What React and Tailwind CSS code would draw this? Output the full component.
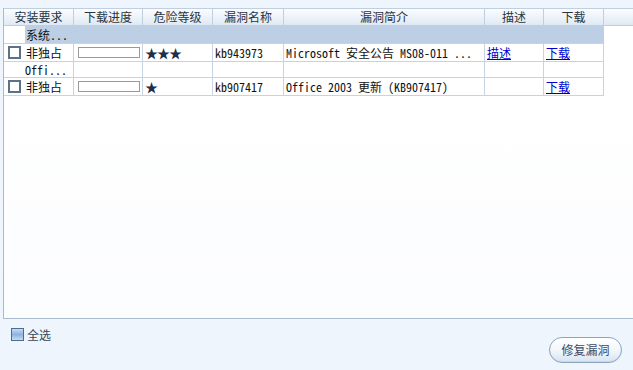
import React from "react";

const cn = "font-['Noto_Sans_CJK_SC','Noto_Sans',sans-serif]";
const mono = "font-['Noto_Sans_Mono_CJK_SC','Noto_Sans_CJK_SC','Liberation_Mono',monospace]";
const widths = ["w-[70px]", "w-[69px]", "w-[70px]", "w-[71px]", "w-[201px]", "w-[59px]", "w-[60px]"];
const heads = ["安装要求", "下载进度", "危险等级", "漏洞名称", "漏洞简介", "描述", "下载"];

function Box() {
  return <span className="inline-block w-[13px] h-[13px] border-2 border-[#5d7189] bg-white shrink-0" />;
}

function Bar() {
  return <span className="inline-block w-[62px] h-[11px] border border-[#9a9a9a] bg-white" />;
}

function Row({ h, cells }) {
  return (
    <div className={`flex ${h} border-b border-[#c6d4e2] w-[600px] bg-white`}>
      {cells.map((c, i) => (
        <div key={i} className={`${widths[i]} shrink-0 border-r border-[#c6d4e2] flex items-center overflow-hidden whitespace-nowrap text-[12px] leading-none text-[#111]`}>
          {c}
        </div>
      ))}
    </div>
  );
}

export default function App() {
  return (
    <div className={`w-[633px] h-[370px] bg-[#eef5fc] pt-[8px] pl-[3px] overflow-hidden ${cn}`}>
      <div className="h-[311px] border-l border-b border-[#a9bccf] bg-white flex flex-col">
        {/* header */}
        <div className="flex h-[18px] border-t border-b border-[#c0cfdf] bg-gradient-to-b from-[#fbfdff] to-[#dfe9f3]">
          {heads.map((t, i) => (
            <div key={i} className={`${widths[i]} shrink-0 border-r border-[#c0cfdf] flex items-center justify-center text-[12px] leading-none text-[#2b3440]`}>
              {t}
            </div>
          ))}
          <div className="flex-1" />
        </div>
        {/* group row */}
        <div className="flex h-[18px] w-[600px] border-b border-[#c6d4e2]">
          <div className="w-[21px] shrink-0 bg-white" />
          <div className="flex-1 bg-[#bccfe5] flex items-center pl-[1px] text-[12px] leading-none text-[#111]">
            系统<span className={mono}>...</span>
          </div>
        </div>
        <Row
          h="h-[18px]"
          cells={[
            <span className="flex items-center gap-[5px] pl-[4px]"><Box />非独占</span>,
            <span className="pl-[4px] flex"><Bar /></span>,
            <span className="pl-[2px] text-[#1e2f4c] text-[13px] tracking-[-1px]">★★★</span>,
            <span className={`pl-[2px] ${mono} text-[12px]`}>kb943973</span>,
            <span className={`pl-[2px] ${mono} text-[12px]`}>Microsoft 安全公告 MS08-011 ...</span>,
            <a href="#" className="pl-[2px] text-[#0000cc] underline">描述</a>,
            <a href="#" className="pl-[2px] text-[#0000cc] underline">下载</a>,
          ]}
        />
        <Row
          h="h-[16px]"
          cells={[
            <span className={`pl-[21px] ${mono} text-[12px]`}>Offi...</span>,
            "",
            "",
            "",
            "",
            "",
            "",
          ]}
        />
        <Row
          h="h-[18px]"
          cells={[
            <span className="flex items-center gap-[5px] pl-[4px]"><Box />非独占</span>,
            <span className="pl-[4px] flex"><Bar /></span>,
            <span className="pl-[2px] text-[#1e2f4c] text-[13px]">★</span>,
            <span className={`pl-[2px] ${mono} text-[12px]`}>kb907417</span>,
            <span className={`pl-[2px] ${mono} text-[12px]`}>Office 2003 更新 (KB907417)</span>,
            "",
            <a href="#" className="pl-[2px] text-[#0000cc] underline">下载</a>,
          ]}
        />
        <div className="flex-1 bg-gradient-to-b from-white to-[#fbfcfe]" />
      </div>
      {/* footer */}
      <div className="flex justify-between items-start">
        <label className="flex items-center gap-[3px] mt-[9px] ml-[8px] text-[12px] leading-none text-[#3a4656]">
          <span className="inline-block w-[13px] h-[13px] border border-[#4f6b8e] bg-gradient-to-b from-[#c7dbf3] via-[#8fb2e0] to-[#c7dbf3]" />
          全选
        </label>
        <button className="mt-[18px] mr-[11px] w-[73px] h-[26px] rounded-full border border-[#8ea4bd] bg-gradient-to-b from-white via-[#f3f7fc] to-[#d6e4f2] text-[12px] leading-none text-[#3b4a63] shadow-[inset_0_-1px_0_#c9d7e6]">
          修复漏洞
        </button>
      </div>
    </div>
  );
}
